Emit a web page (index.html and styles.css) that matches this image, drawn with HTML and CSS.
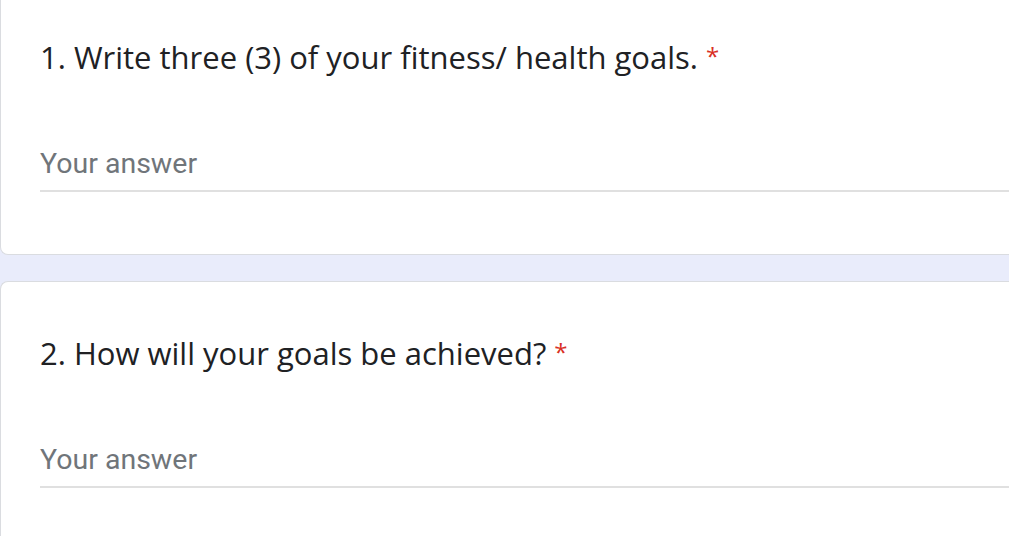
FILE: index.html
```html
<!DOCTYPE html>
<html>
<head>
<meta charset="utf-8">
<link rel="stylesheet" href="styles.css">
</head>
<body>
<div class="page">
  <div class="card card-first">
    <div class="question">1. Write three (3) of your fitness/ health goals.<span class="req">*</span></div>
    <div class="answer"><span class="placeholder">Your answer</span></div>
  </div>
  <div class="card card-second">
    <div class="question">2. How will your goals be achieved?<span class="req">*</span></div>
    <div class="answer"><span class="placeholder">Your answer</span></div>
  </div>
</div>
</body>
</html>
```

FILE: styles.css
```css
html, body {
  margin: 0;
  padding: 0;
  background: #e9ecfb;
  overflow: hidden;
}
.page {
  display: flex;
  flex-direction: column;
  gap: 26px;
  width: 1009px;
}
.card {
  background: #fff;
  border: 1px solid #dadce0;
  border-right: none;
  border-radius: 8px 0 0 8px;
  padding-left: 39px;
}
.card-first {
  border-top: none;
  border-radius: 0 0 0 8px;
  padding-top: 36px;
  padding-bottom: 62px;
}
.card-second {
  border-bottom: none;
  border-radius: 8px 0 0 0;
  padding-top: 50px;
  padding-bottom: 48px;
}
.question {
  font-family: "Open Sans", sans-serif;
  font-size: 31px;
  line-height: 40px;
  color: #202124;
}
.req {
  color: #d93025;
  font-size: 24px;
  margin-left: 8px;
  vertical-align: 4px;
}
.answer {
  margin-top: 71px;
  border-bottom: 2px solid #e0e0e0;
  padding-bottom: 10px;
}
.placeholder {
  font-family: Roboto, sans-serif;
  font-size: 28.5px;
  line-height: 32px;
  color: #70757a;
  display: block;
}
```
